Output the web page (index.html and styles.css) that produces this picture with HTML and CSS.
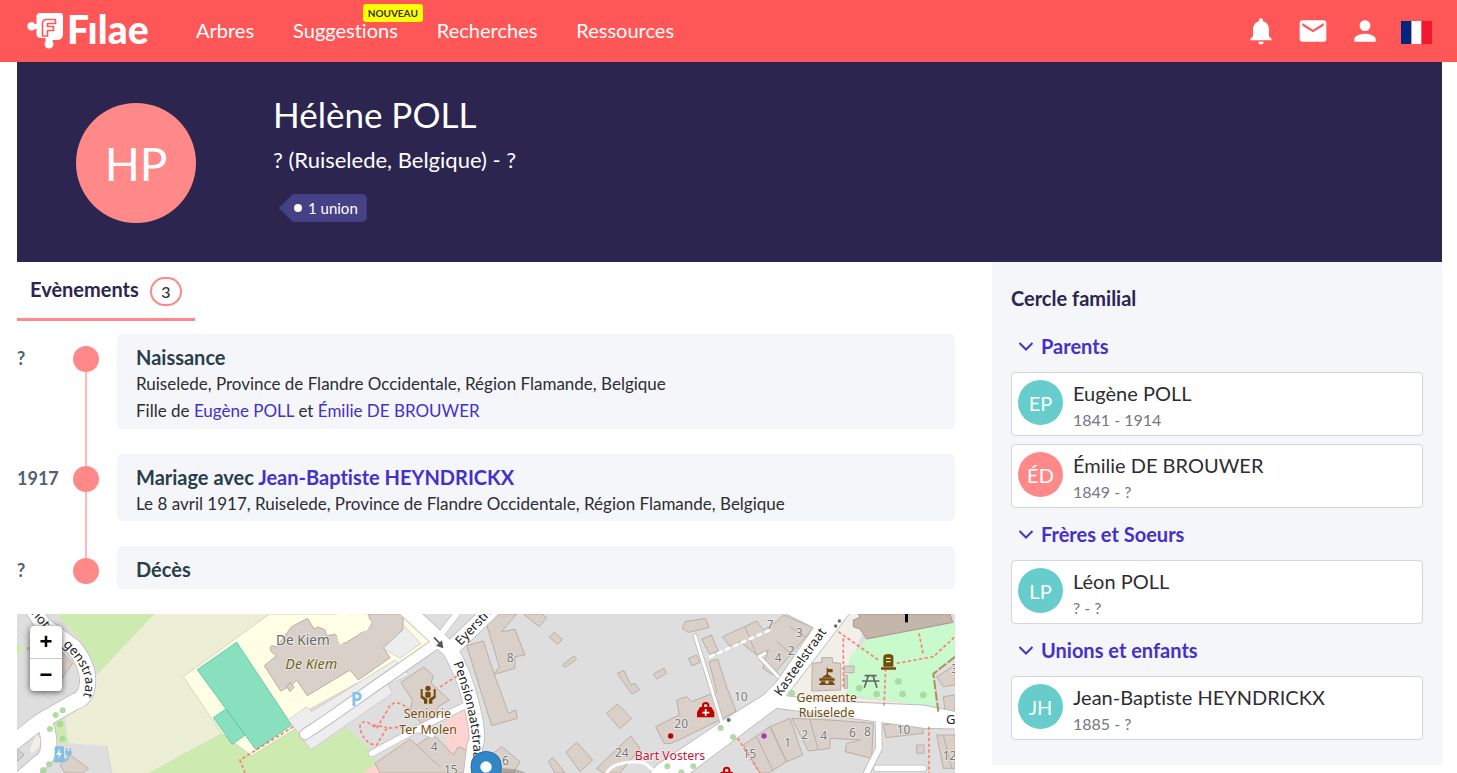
FILE: index.html
```html
<!DOCTYPE html>
<html lang="fr">
<head>
<meta charset="utf-8">
<meta name="viewport" content="width=device-width, initial-scale=1">
<title>Hélène POLL - Filae</title>
<link rel="stylesheet" href="styles.css">
</head>
<body>
<header class="topbar">
  <a class="logo" href="#" aria-label="Filae">
    <svg class="logo-mark" viewBox="0 0 38 38" aria-hidden="true">
      <path fill="#fff" d="M13 1h20q3 0 3 3v18q0 6-6 6h-4q-.5 0-.5 1.500 1 1 1 2.500a4.500 4.500 0 0 1-9 0q0-1.500 1-2.500V26H14q-4.500 0-4.500-4v-5H8Q6.500 18.500 4.500 18.500a4.200 4.200 0 1 1 0-8.400Q6.500 10 8 12h1.500V4.500q0-3.500 3.500-3.500z"/>
      <path fill="none" stroke="#ff5757" stroke-width="1.600" d="M28.500 7.500h-9q-4 0-4 4v12.500h5v-5.500h6v-4h-6v-3h8z"/>
    </svg>
    <span class="logo-word">Fılae</span>
  </a>
  <nav class="menu">
    <a href="#">Arbres</a>
    <a href="#" class="menu-new">Suggestions<span class="new">NOUVEAU</span></a>
    <a href="#">Recherches</a>
    <a href="#">Ressources</a>
  </nav>
  <div class="tools">
    <button type="button" aria-label="Notifications"><svg viewBox="0 0 24 24"><path d="M12 22c1.100 0 2-.9 2-2h-4c0 1.100.9 2 2 2zm6-6v-5c0-3.070-1.640-5.640-4.500-6.320V4c0-.83-.67-1.500-1.500-1.500s-1.500.67-1.500 1.500v.68C7.630 5.360 6 7.920 6 11v5l-2 2v1h16v-1l-2-2z"/></svg></button>
    <button type="button" aria-label="Messages"><svg viewBox="0 0 24 24"><path d="M20 4H4c-1.100 0-2 .9-2 2v12c0 1.100.9 2 2 2h16c1.100 0 2-.9 2-2V6c0-1.100-.9-2-2-2zm0 4-8 5-8-5V6l8 5 8-5v2z"/></svg></button>
    <button type="button" aria-label="Compte"><svg viewBox="0 0 24 24"><path d="M12 12c2.210 0 4-1.790 4-4s-1.790-4-4-4-4 1.790-4 4 1.790 4 4 4zm0 2c-2.670 0-8 1.340-8 4v2h16v-2c0-2.660-5.330-4-8-4z"/></svg></button>
    <button type="button" class="flag" aria-label="Langue : français"><svg viewBox="0 0 31 23"><path fill="#00267f" d="M0 0h10.500v23H0z"/><path fill="#fff" d="M10.500 0h10v23h-10z"/><path fill="#f31830" d="M20.500 0H31v23H20.500z"/></svg></button>
  </div>
</header>

<div class="page">
  <section class="hero">
    <div class="portrait">HP</div>
    <div class="identity">
      <h1>Hélène POLL</h1>
      <p class="life">? (Ruiselede, Belgique) - ?</p>
      <span class="tag"><span class="tag-dot"></span>1 union</span>
    </div>
  </section>

  <div class="columns">
    <main class="main">
      <a class="tab" href="#">Evènements <span class="count">3</span></a>
      <ol class="timeline">
        <li class="event">
          <span class="date">?</span><span class="rail"></span>
          <article class="event-card">
            <h2>Naissance</h2>
            <p>Ruiselede, Province de Flandre Occidentale, Région Flamande, Belgique</p>
            <p>Fille de <a href="#">Eugène POLL</a> et <a href="#">Émilie DE BROUWER</a></p>
          </article>
        </li>
        <li class="event">
          <span class="date">1917</span><span class="rail"></span>
          <article class="event-card">
            <h2>Mariage avec <a href="#">Jean-Baptiste HEYNDRICKX</a></h2>
            <p>Le 8 avril 1917, Ruiselede, Province de Flandre Occidentale, Région Flamande, Belgique</p>
          </article>
        </li>
        <li class="event">
          <span class="date">?</span><span class="rail"></span>
          <article class="event-card"><h2>Décès</h2></article>
        </li>
      </ol>
      <div class="map">
        <svg class="map-canvas" viewBox="21 27 2814 477" preserveAspectRatio="xMinYMin slice" role="img" aria-label="Carte de Ruiselede">
          <rect x="0" y="0" width="2900" height="900" fill="#dedede"/>
          <!-- land use -->
          <path fill="#ecefd5" d="M430 27 265 205 165 330 175 415 290 422 305 504 415 504 635 385 520 215 780 27z"/>
          <path fill="#cdebb0" d="M140 27H433L265 205 215 110zM415 504 635 385 725 445 855 372 903 434 1010 365 1075 430 1120 504zM110 350 155 325 175 415 130 415zM21 115 42 128 21 150z"/>
          <path fill="#ffffe5" stroke="#c9c8ae" stroke-width="2" d="M520 215 778 27H1175L1288 120 1160 215 1040 235 840 345 855 372 725 452 635 385z"/>
          <path fill="#88e0be" stroke="#68cba4" stroke-width="3" d="M562 194 680 112 845 360 738 434 648 312zM610 338 648 312 705 390 667 418z"/>
          <path fill="#ededed" stroke="#c5c0c6" stroke-width="2" d="M835 345 890 305 905 320 1155 165 1197 210 1135 240 1147 265 903 434zM1120 130 1180 60 1232 115 1170 160z"/>
          <path fill="#ffd4d0" d="M1300 355 1370 312 1392 460 1375 504H1290L1320 470zM1060 504 1115 465 1125 504z"/>
          <path fill="#f2efe9" d="M2515 27H2580L2530 155 2510 275 2780 305 2330 272zM60 430 80 388 92 402 90 420 65 447z"/>
          <path fill="#c8facc" d="M2520 155 2570 102 2835 55V150L2770 205 2778 305 2510 270 2515 190z"/>
          <g fill="none" stroke="#c9c9c9" stroke-width="2"><path d="M75 245 130 290M290 422 305 504M21 70 80 130"/></g>
          <!-- buildings -->
          <g fill="#d9d0c9" stroke="#bcaea4" stroke-width="3">
            <path d="M763 182 800 152Q770 135 785 122L800 125 845 65 893 40 912 72 925 66 945 75 950 92 975 88 1005 115 1045 90 1085 60 1075 27H1180L1178 75 1120 128 1140 158 1045 225 1020 195 892 272 860 225 845 240 812 258z"/>
            <path d="M830 245 840 233 852 247 840 260zM50 130 130 115 188 175 155 222zM150 480 180 450 235 490 220 504H165zM21 430 42 450 21 470z"/>
            <path d="M1173 232 1240 186 1270 212 1263 235 1318 285 1285 305 1265 345 1235 355 1200 320 1207 285z"/>
            <path d="M1370 122 1420 108 1452 205 1495 325 1517 315 1522 340 1445 362z"/>
            <path d="M1430 60 1460 27H1520L1475 80 1515 73 1545 150 1515 155V190L1452 208 1468 185z"/>
            <path d="M1540 27H1595L1610 38 1588 65zM1618 97 1632 82 1657 103 1643 118zM1658 180 1692 153 1700 162 1665 188zM1822 205 1842 197 1862 240 1875 235 1888 255 1865 267zM1790 325 1822 297 1865 340 1830 371zM1668 442 1700 412 1748 465 1710 500zM1615 470 1628 457 1665 504H1635zM1760 490 1862 392 1890 430 1830 504H1780zM1450 445 1475 425 1530 470 1510 504H1450z"/>
            <path d="M1095 475 1200 402 1220 420 1270 388 1330 450 1345 425 1380 440 1360 504H1110z"/>
            <path d="M2017 70 2025 50 2087 40 2097 68 2035 82zM2075 103 2104 90 2125 138 2100 148zM2035 160 2060 150 2070 172 2045 182zM1930 207 1962 190 1970 205 1940 222z"/>
            <path d="M2097 170 2123 162 2150 245 2178 318 2130 345 1985 415 1962 415 1937 365 2008 330 2000 285 2030 275 2045 290 2120 260z"/>
            <path d="M2138 95 2240 48 2260 75 2300 50 2320 30 2410 68 2290 210 2258 190 2275 135 2240 150 2190 110 2160 125z"/>
            <path d="M2407 175 2435 172V158H2467V172L2492 175V255L2405 258zM2503 183H2532V203H2503zM2503 210H2512V250H2503z"/>
            <path d="M2200 420 2280 365 2330 470 2275 504H2250zM2280 365 2340 340 2378 450 2330 470zM2345 340 2460 345 2590 355 2585 460 2505 440 2510 415 2550 405 2460 400V430L2395 438zM2620 360 2735 345 2740 385 2628 398zM2720 420H2742V445H2720zM2780 390H2835V490H2800zM2800 275 2835 270V318H2805zM2780 215 2835 180V240L2800 245z"/>
            <path fill="none" d="M2240 395 2290 500M2205 65 2240 150M2300 110 2350 150M2340 65 2385 95M2400 345 2425 435M2800 390 2825 490M1220 420 1290 485"/>
            <path fill="#ffffe5" stroke="none" d="M990 120 1030 90 1072 75 1085 50 1060 27H980L1000 45 1025 27 1060 60 1037 82 1000 65 980 90z"/>
          </g>
          <path fill="#c4b6ab" stroke="#a6968a" stroke-width="3" d="M2530 45 2550 37 2545 27H2820L2828 52 2570 102 2550 72 2530 65z"/>
          <!-- roads -->
          <g fill="none" stroke="#bdbdbd" stroke-linecap="round" stroke-linejoin="round">
            <path stroke-width="51" d="M60 0 100 60 190 125Q235 180 233 230T195 290L90 350 0 420M110 370Q125 430 105 460L10 540"/>
            <path stroke-width="36" d="M885 388 960 338 1100 240 1275 118"/>
            <path stroke-width="50" d="M1185 10 1320 135Q1360 200 1385 300T1395 420L1380 540M1320 135 1450 10"/>
            <path stroke-width="22" d="M1295 85 1345 20M1085 445 1225 370 1390 290M1230 375 1265 388"/>
            <path stroke-width="22" d="M2605 320 2607 430 2570 504M2600 490H2740"/>
            <path stroke-width="14" d="M2055 92 2135 350M2305 215 2248 155 2265 145"/>
          </g>
          <path fill="#fff" stroke="#bdbdbd" stroke-width="3" d="M2322 24 2410 68 2300 230 2260 270 2140 345 1940 480 1920 504 1930 520H2020L2300 310 2740 370 2840 372V320L2740 300 2450 288 2330 272 2520 24z"/>
          <g fill="none" stroke="#fff" stroke-linecap="round" stroke-linejoin="round">
            <path stroke-width="46" d="M60 0 100 60 190 125Q235 180 233 230T195 290L90 350 0 420M110 370Q125 430 105 460L10 540"/>
            <path stroke-width="30" d="M885 388 960 338 1100 240 1275 118"/>
            <path stroke-width="45" d="M1185 10 1320 135Q1360 200 1385 300T1395 420L1380 540M1320 135 1450 10"/>
            <path stroke-width="18" d="M1295 85 1345 20M1085 445 1225 370 1390 290M1230 375 1265 388"/>
            <path stroke-width="17" d="M2605 320 2607 430 2570 504M2600 490H2740"/>
            <path stroke-width="9" d="M2055 92 2135 350M2305 215 2248 155 2265 145M1880 470 1905 475 1940 504M1790 504Q1810 470 1880 470"/>
            <path stroke-width="8" stroke-dasharray="12 14" d="M2100 155 2280 75"/>
          </g>
          <!-- footpaths -->
          <g fill="none" stroke="#fa8072" stroke-width="5" stroke-dasharray="10 7">
            <path d="M850 365 738 435 690 465 705 504M1290 246 1345 210M1200 315Q1150 270 1130 320L1100 370 1070 350Q1040 350 1055 385T1100 420L1130 370 1175 366M1090 360 1130 367"/>
            <path d="M2485 80 2605 165M2500 100V250M2183 400 2250 504M2757 365V504M2727 85 2740 150M2660 175 2770 155 2835 95M2627 190 2622 305"/>
          </g>
          <path fill="none" stroke="#ae8f55" stroke-width="6" stroke-dasharray="28 6" d="M2835 155 2770 207 2785 320"/>
          <!-- trees and small points -->
          <g fill="#a8d69d" fill-opacity=".9"><circle cx="137" cy="330" r="9"/><circle cx="158" cy="316" r="9"/><circle cx="150" cy="357" r="10"/><circle cx="120" cy="372" r="9"/><circle cx="157" cy="401" r="9"/><circle cx="117" cy="478" r="9"/><circle cx="100" cy="496" r="10"/><circle cx="2345" cy="265" r="10"/><circle cx="2132" cy="369" r="9"/><circle cx="2169" cy="396" r="9"/><circle cx="1972" cy="484" r="9"/><circle cx="2050" cy="484" r="9"/><circle cx="2014" cy="502" r="9"/><circle cx="2548" cy="250" r="10"/><circle cx="2600" cy="267" r="10"/><circle cx="2665" cy="229" r="10"/><circle cx="2678" cy="267" r="10"/><circle cx="2740" cy="270" r="10"/></g>
          <g fill="#666"><circle cx="2156" cy="345" r="6"/><circle cx="2477" cy="63" r="5"/><circle cx="2488" cy="48" r="5"/></g>
          <circle cx="1982" cy="393" r="8" fill="#bf0000"/><circle cx="2262" cy="393" r="8" fill="#ac39ac"/>
          <path d="M2685 27H2694V52H2685z"/>
          <path fill="none" stroke="#555" stroke-width="5" d="M1272 97 1292 118"/><path fill="#555" d="M1300 130 1278 122 1296 106z"/>
          <!-- amenity symbols -->
          <g fill="#82bfe0"><rect x="134" y="424" width="28" height="44" rx="4"/><rect x="131" y="466" width="34" height="6"/><path fill="none" stroke="#82bfe0" stroke-width="4" d="M161 460Q172 475 175 455V445M170 430V438M181 430V438"/><path d="M166 438H185V446Q175 458 166 446z"/><path fill="#fff" d="M150 430 139 449H148L143 463 156 444H148z"/></g>
          <g fill="#734a08">
            <circle cx="1254" cy="250" r="8"/><rect x="1246" y="260" width="16" height="18" rx="4"/><path d="M1232 252H1238V273L1252 282V296H1242V286L1232 278zM1277 252H1271V273L1257 282V296H1267V286L1277 278z"/>
            <path d="M2450 188H2454V192H2468V202H2454V208L2469 218H2434L2450 208zM2428 220H2474V227H2428zM2433 229H2470V235H2474V240H2428V235H2433z"/><path fill="#d9d0c9" d="M2446 227H2456V236H2446z"/>
            <path d="M2620 185V157Q2620 147 2635 147T2650 157V185zM2613 187H2658V194H2613z"/><path fill="#c8facc" d="M2628 158H2642V162H2628zM2628 168H2642V172H2628z"/>
          </g>
          <path fill="none" stroke="#666" stroke-width="5" d="M2564 212H2600M2556 228H2608M2575 212 2563 248M2589 212 2601 248"/>
          <g fill="#bf0000"><path d="M2061 337V322L2070 306H2076V300Q2077 291 2087 291T2098 300V306H2104L2113 322V337zM2082 306H2092V300Q2087 294 2082 300z"/><path d="M2124 531V516L2133 500H2139V494Q2140 485 2150 485T2161 494V500H2167L2176 516V531zM2145 500H2155V494Q2150 488 2145 494z"/></g>
          <path stroke="#fff" stroke-width="5" d="M2077 323H2098M2087 312V333"/>
          <!-- labels -->
          <g class="labels">
            <text class="school" x="798" y="120">De Kiem</text>
            <text class="school italic" x="826" y="191">De Kiem</text>
            <text class="brown" x="1252" y="340" text-anchor="middle">Seniorie</text>
            <text class="brown" x="1254" y="386" text-anchor="middle">Ter Molen</text>
            <text class="brown" x="2450" y="291" text-anchor="middle">Gemeente</text>
            <text class="brown" x="2450" y="337" text-anchor="middle">Ruiselede</text>
            <text x="1874" y="464" fill="#c8143c">Bart Vosters</text>
            <text class="park" x="1022" y="303">P</text>
            <g class="nums"><text x="1490" y="170">8</text><text x="1262" y="438">4</text><text x="1302" y="508">15</text><text x="1476" y="480">6</text><text x="1815" y="456">24</text><text x="1993" y="370">20</text><text x="2172" y="289">10</text><text x="2270" y="72">7</text><text x="2358" y="96">3</text><text x="2333" y="150">2</text><text x="2294" y="172">4</text><text x="2198" y="458">15</text><text x="2323" y="427">1</text><text x="2374" y="402">2</text><text x="2431" y="406">4</text><text x="2517" y="395">6</text><text x="2562" y="394">8</text><text x="2660" y="388">10</text><text x="2798" y="465">12</text><text x="2824" y="205">3</text></g>
            <g class="streets">
              <path id="street-a" fill="none" d="M158 120Q205 165 220 205T212 290"/><text><textPath href="#street-a">genstraat</textPath></text>
              <path id="street-d" fill="none" d="M62 25 100 70 150 110"/><text><textPath href="#street-d">not</textPath></text>
              <path id="street-b" fill="none" d="M1330 175Q1362 260 1378 340T1390 520"/><text><textPath href="#street-b">Pensionaatstraat</textPath></text>
              <path id="street-c" fill="none" d="M1352 124 1470 0"/><text><textPath href="#street-c">Eyerstraat</textPath></text>
              <path id="street-e" fill="none" d="M2312 276 2480 38"/><text><textPath href="#street-e">Kasteelstraat</textPath></text>
              <text x="2808" y="357">G</text>
            </g>
          </g>
          <!-- location pin -->
          <ellipse cx="1480" cy="520" rx="80" ry="30" fill="#000" opacity=".2"/>
          <path fill="#3186c8" stroke="#2570ab" stroke-width="3" d="M1428 439Q1474 443 1474 486 1474 530 1428 590 1383 530 1383 486 1383 443 1428 439z"/>
          <circle cx="1428" cy="486" r="17" fill="#fff"/>
        </svg>
        <div class="zoom">
          <button type="button" aria-label="Zoom avant">+</button>
          <button type="button" aria-label="Zoom arrière">−</button>
        </div>
      </div>
    </main>

    <aside class="family">
      <h2>Cercle familial</h2>
      <section>
        <button class="group" type="button"><svg viewBox="0 0 16 12"><path d="M1.500 3 8 9.500 14.500 3"/></svg>Parents</button>
        <div class="people">
          <a class="person" href="#"><span class="avatar">EP</span><span class="who"><span class="name">Eugène POLL</span><span class="years">1841 - 1914</span></span></a>
          <a class="person" href="#"><span class="avatar female">ÉD</span><span class="who"><span class="name">Émilie DE BROUWER</span><span class="years">1849 - ?</span></span></a>
        </div>
      </section>
      <section>
        <button class="group" type="button"><svg viewBox="0 0 16 12"><path d="M1.500 3 8 9.500 14.500 3"/></svg>Frères et Soeurs</button>
        <div class="people">
          <a class="person" href="#"><span class="avatar">LP</span><span class="who"><span class="name">Léon POLL</span><span class="years">? - ?</span></span></a>
        </div>
      </section>
      <section>
        <button class="group" type="button"><svg viewBox="0 0 16 12"><path d="M1.500 3 8 9.500 14.500 3"/></svg>Unions et enfants</button>
        <div class="people">
          <a class="person" href="#"><span class="avatar">JH</span><span class="who"><span class="name">Jean-Baptiste HEYNDRICKX</span><span class="years">1885 - ?</span></span></a>
        </div>
      </section>
    </aside>
  </div>
</div>
</body>
</html>
```

FILE: styles.css
```css
* { box-sizing: border-box; }
body {
  margin: 0;
  min-height: 100vh;
  display: flex;
  flex-direction: column;
  font-family: Lato, "Open Sans", sans-serif;
  font-size: 18px;
  font-variant-ligatures: none;
  color: #2d2d32;
  background: #fff;
}
h1, h2, p, ol { margin: 0; padding: 0; font-weight: 400; }
a { color: #4530c8; text-decoration: none; }
button { border: 0; padding: 0; background: none; font: inherit; color: inherit; cursor: pointer; }

.topbar {
  height: 62px;
  display: flex;
  align-items: center;
  padding: 0 25px 0 27px;
  background: #ff5757;
  color: #fff;
}
.logo { display: flex; align-items: center; width: 121px; gap: 2px; color: #fff; }
.logo-mark { width: 38px; height: 38px; flex: none; }
.logo-word { padding-bottom: 4px; font-size: 39px; line-height: 36px; font-weight: 900; }
.menu { display: flex; gap: 39px; margin-left: 48px; padding-bottom: 2px; font-size: 20px; line-height: 24px; }
.menu a { color: #fff; }
.menu-new { position: relative; }
.new {
  position: absolute;
  right: -25px;
  top: -14px;
  padding: 0 5px;
  border-radius: 3px;
  background: #ff0;
  color: #333;
  font-size: 10px;
  line-height: 18px;
  font-weight: 700;
}
.tools { display: flex; gap: 20px; margin-left: auto; align-items: flex-start; }
.tools button { display: block; height: 32px; }
.tools svg { display: block; width: 32px; height: 32px; fill: #fff; }
.tools .flag svg { width: 31px; height: 23px; margin-top: 3px; }

.page { flex: 1; display: flex; flex-direction: column; padding: 0 15px 0 17px; }
.hero { display: flex; gap: 77px; height: 200px; padding: 30px 59px; background: #2c254f; color: #fff; }
.portrait {
  width: 120px;
  height: 120px;
  margin-top: 11px;
  border-radius: 50%;
  background: #ff8989;
  font-size: 46px;
  line-height: 122px;
  text-align: center;
}
.identity h1 { font-size: 35px; line-height: 45px; }
.life { margin-top: 9px; font-size: 22px; line-height: 28px; }
.tag {
  display: inline-flex;
  align-items: center;
  gap: 6px;
  margin: 20px 0 0 6px;
  height: 28px;
  padding: 0 9px 0 15px;
  border-radius: 0 5px 5px 0;
  background: #464084;
  clip-path: polygon(14px 0, 100% 0, 100% 100%, 14px 100%, 0 50%);
  font-size: 15px;
}
.tag-dot { width: 8px; height: 8px; border-radius: 50%; background: #fff; }

.columns { flex: 1; display: flex; gap: 37px; align-items: stretch; }
.main { flex: 1; min-width: 0; display: flex; flex-direction: column; }
.tab {
  align-self: flex-start;
  display: flex;
  gap: 11px;
  height: 59px;
  padding: 14px 13px 0;
  border-bottom: 3px solid #ff8989;
  color: #2c254f;
  font-size: 20px;
  line-height: 26px;
  font-weight: 700;
}
.count {
  width: 32px;
  height: 29px;
  margin-top: 1px;
  border: 2px solid #ff8989;
  border-radius: 15px;
  color: #333;
  font-size: 16px;
  line-height: 25px;
  font-weight: 500;
  text-align: center;
}
.timeline { margin-top: 13px; list-style: none; }
.event { display: grid; grid-template-columns: 56px 26px 1fr; padding-bottom: 25px; position: relative; }
.date { padding-top: 10px; color: #526170; font-size: 18px; line-height: 28px; font-weight: 700; }
.rail { padding-top: 12px; }
.rail::after {
  content: "";
  display: block;
  width: 26px;
  height: 26px;
  position: relative;
  border-radius: 50%;
  background: #ff8989;
}
.event:not(:last-child)::before {
  content: "";
  position: absolute;
  left: 68px;
  top: 24px;
  bottom: -24px;
  width: 2px;
  background: #ffb9b9;
}
.event-card { min-height: 43px; margin-left: 18px; padding: 10px 19px 4px; border-radius: 5px; background: #f4f6fa; }
.event-card h2 { color: #293e49; font-size: 20px; line-height: 26px; font-weight: 700; }
.event-card p { font-size: 17px; line-height: 28px; }
.event-card h2 + p { line-height: 27px; }

.map { position: relative; flex: 1; min-height: 159px; overflow: hidden; }
.map-canvas { position: absolute; width: 100%; height: 100%; }
.labels { font-family: "Noto Sans", sans-serif; font-size: 37px; paint-order: stroke; }
.labels text { stroke: #fff; stroke-opacity: .6; stroke-width: 5px; }
.school { fill: #666; font-size: 41px; }
.italic { fill: #6b6318; font-style: italic; font-size: 43px; }
.brown { fill: #734a08; }
.nums { fill: #777; font-size: 36px; }
.streets { fill: #222; font-size: 39px; }
.labels .park { fill: #82c4e8; font-size: 56px; font-weight: 700; stroke: none; }
.zoom {
  position: absolute;
  left: 13px;
  top: 12px;
  width: 32px;
  border-radius: 4px;
  background: #fff;
  box-shadow: 0 1px 6px rgba(0, 0, 0, .65);
}
.zoom button { display: block; width: 32px; height: 32px; color: #000; font: 700 22px/32px "Liberation Sans", sans-serif; }
.zoom button + button { border-top: 1px solid #ccc; height: 33px; }

.family { width: 450px; align-self: flex-start; padding: 22px 19px 25px; background: #f4f6fa; }
.family h2 { padding-bottom: 8px; color: #2c254f; font-size: 20px; line-height: 28px; font-weight: 700; }
.group {
  display: flex;
  align-items: center;
  gap: 7px;
  height: 52px;
  padding-left: 7px;
  color: #4530c8;
  font-size: 20px;
  font-weight: 700;
}
.group svg { width: 16px; height: 12px; fill: none; stroke: #4530c8; stroke-width: 2px; }
.people { display: grid; gap: 8px; }
.person {
  display: flex;
  gap: 10px;
  height: 64px;
  padding: 7px 6px;
  border: 1px solid #d3d7dc;
  border-radius: 4px;
  background: #fff;
  color: #2d2d32;
}
.avatar {
  width: 45px;
  height: 45px;
  border-radius: 50%;
  background: #66cccc;
  color: #fff;
  font-size: 20px;
  line-height: 46px;
  text-align: center;
}
.female { background: #ff8989; }
.who { display: flex; flex-direction: column; }
.name { font-size: 20px; line-height: 27px; }
.years { color: #777582; font-size: 16px; line-height: 26px; }
```
